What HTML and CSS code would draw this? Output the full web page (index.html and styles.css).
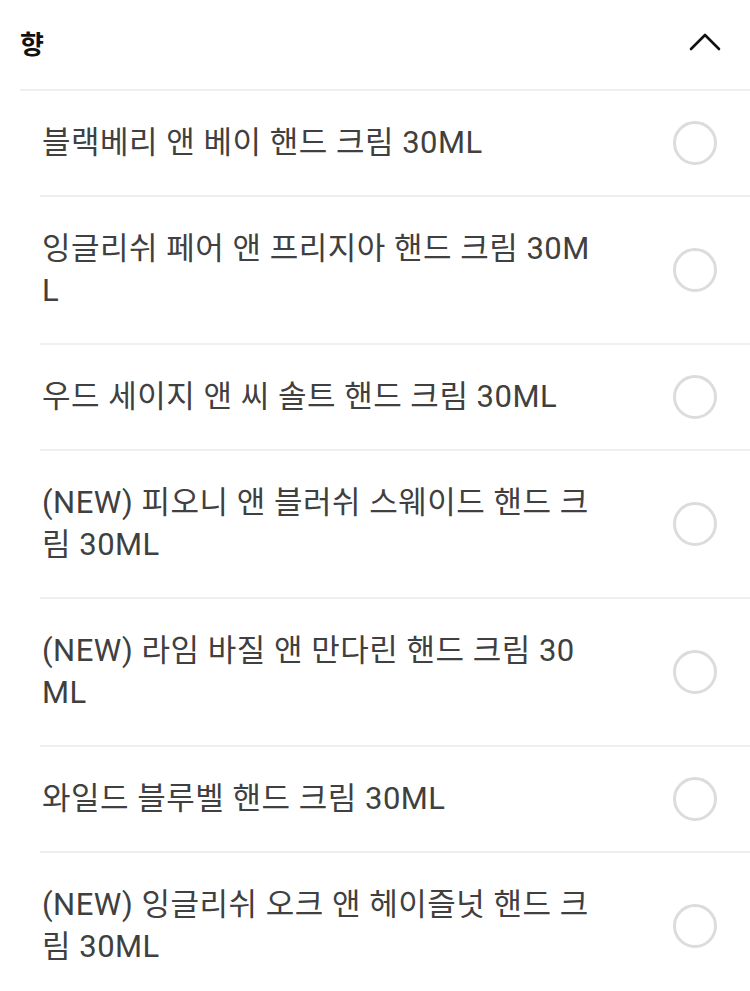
FILE: index.html
```html
<!DOCTYPE html>
<html lang="ko">
<head>
<meta charset="utf-8">
<link rel="stylesheet" href="styles.css">
</head>
<body>
<div class="panel">
  <div class="header">
    <span class="title">향</span>
    <svg class="chev" width="32" height="20" viewBox="0 0 32 20"><path d="M2 17 L16 3 L30 17" fill="none" stroke="#111" stroke-width="2.6" stroke-linecap="round" stroke-linejoin="round"/></svg>
  </div>
  <ul class="list">
    <li class="item"><span class="name">블랙베리 앤 베이 핸드 크림 30ML</span><span class="radio"></span></li>
    <li class="item"><span class="name">잉글리쉬 페어 앤 프리지아 핸드 크림 30ML</span><span class="radio"></span></li>
    <li class="item"><span class="name">우드 세이지 앤 씨 솔트 핸드 크림 30ML</span><span class="radio"></span></li>
    <li class="item"><span class="name">(NEW) 피오니 앤 블러쉬 스웨이드 핸드 크림 30ML</span><span class="radio"></span></li>
    <li class="item"><span class="name">(NEW) 라임 바질 앤 만다린 핸드 크림 30ML</span><span class="radio"></span></li>
    <li class="item"><span class="name">와일드 블루벨 핸드 크림 30ML</span><span class="radio"></span></li>
    <li class="item"><span class="name">(NEW) 잉글리쉬 오크 앤 헤이즐넛 핸드 크림 30ML</span><span class="radio"></span></li>
  </ul>
</div>
</body>
</html>
```

FILE: styles.css
```css
html, body {
  margin: 0;
  padding: 0;
  background: #fff;
}
body {
  font-family: Roboto, "Noto Sans CJK KR", sans-serif;
  color: #333;
}
.panel {
  padding-left: 20px;
}
.header {
  display: flex;
  align-items: center;
  justify-content: space-between;
  height: 86px;
  border-bottom: 2px solid #efefef;
  padding-right: 29px;
  padding-bottom: 3px;
}
.title {
  font-family: "Noto Sans CJK KR", sans-serif;
  font-size: 26px;
  font-weight: 700;
  color: #111;
  line-height: 1;
}
.chev {
  display: block;
  margin-top: -2px;
}
.list {
  list-style: none;
  margin: 0;
  padding: 0 0 0 20px;
}
.item {
  display: flex;
  align-items: center;
  justify-content: space-between;
  padding: 31px 33px 31px 2px;
  border-bottom: 2px solid #efefef;
}
.name {
  width: 550px;
  font-size: 31px;
  line-height: 42px;
  letter-spacing: 0.5px;
  word-break: break-all;
  color: #404040;
}
.radio {
  width: 38px;
  height: 38px;
  margin: -1px 0;
  border: 3px solid #dcdcdc;
  border-radius: 50%;
  flex: none;
}
```
